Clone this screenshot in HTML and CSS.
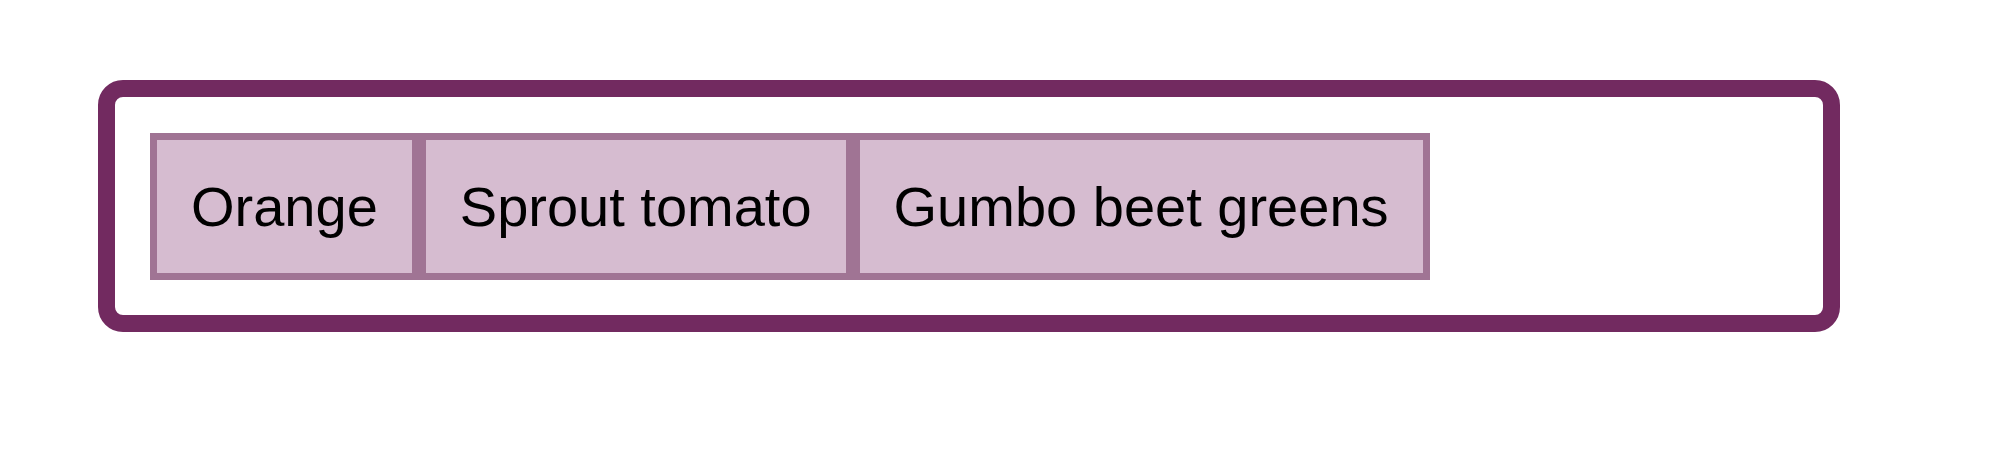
FILE: index.html
```html
<!DOCTYPE html>
<html>
<head>
<meta charset="utf-8">
<link rel="stylesheet" href="styles.css">
</head>
<body>
<div class="box">
  <div class="item">Orange</div>
  <div class="item">Sprout tomato</div>
  <div class="item">Gumbo beet greens</div>
</div>
</body>
</html>
```
FILE: styles.css
```css
html, body {
  margin: 0;
  padding: 0;
  background: #ffffff;
}
body {
  padding: 80px 0 0 98px;
  font-family: "Liberation Sans", Arial, sans-serif;
}
.box {
  box-sizing: border-box;
  width: 1742px;
  display: flex;
  align-items: flex-start;
  border: 17px solid #722a60;
  border-radius: 25px;
  padding: 36px 35px 35px;
}
.item {
  font-size: 56px;
  line-height: normal;
  color: #000;
  background: #d6bcd0;
  border: 7px solid #a07494;
  padding: 34px 34px 34px;
}
```
